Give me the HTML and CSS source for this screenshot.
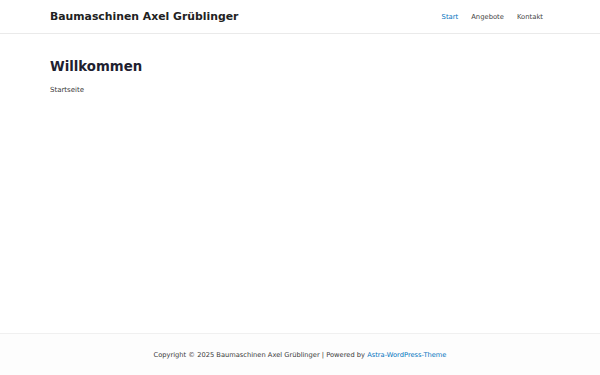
FILE: index.html
```html
<!DOCTYPE html>
<html lang="de">
<head>
  <meta charset="UTF-8">
  <meta name="viewport" content="width=device-width, initial-scale=1.0">
  <title>Baumaschinen Axel Grüblinger</title>
  <link rel="stylesheet" href="styles.css">
</head>
<body>
  <header class="site-header">
    <div class="wrap header-row">
      <a class="site-title" href="#">Baumaschinen Axel Grüblinger</a>
      <nav class="main-nav">
        <a class="current" href="#">Start</a>
        <a href="#">Angebote</a>
        <a href="#">Kontakt</a>
      </nav>
    </div>
  </header>

  <main class="site-content">
    <div class="wrap">
      <h1>Willkommen</h1>
      <p>Startseite</p>
    </div>
  </main>

  <footer class="site-footer">
    <p>Copyright © 2025 Baumaschinen Axel Grüblinger | Powered by <a href="#">Astra-WordPress-Theme</a></p>
  </footer>
</body>
</html>
```

FILE: styles.css
```css
html, body { height: 100%; }
body { margin: 0; font-family: "DejaVu Sans", sans-serif; color: #3a3a3a; background: #fff; display: flex; flex-direction: column; }
a { text-decoration: none; }
.wrap { padding: 0 50px 0 50px; }
.site-header { border-bottom: 1px solid #eaeaea; }
.header-row { display: flex; align-items: center; justify-content: space-between; height: 33px; padding-right: 57px; }
.site-title { font-size: 10.85px; font-weight: bold; color: #222; }
.main-nav { display: flex; gap: 13px; }
.main-nav a { font-size: 6.8px; color: #444; }
.main-nav a.current { color: #0274be; }
.site-content { flex: 1; padding-top: 25px; }
h1 { margin: 0; font-size: 13.3px; font-weight: bold; color: #1e2130; }
.site-content p { margin: 12px 0 0; font-size: 7px; color: #3a3a3a; }
.site-footer { border-top: 1px solid #f0f0f0; background: #fdfdfd; height: 41px; display: flex; align-items: center; justify-content: center; }
.site-footer p { margin: 0; font-size: 6.7px; color: #3a3a3a; }
.site-footer a { color: #0274be; }
```
